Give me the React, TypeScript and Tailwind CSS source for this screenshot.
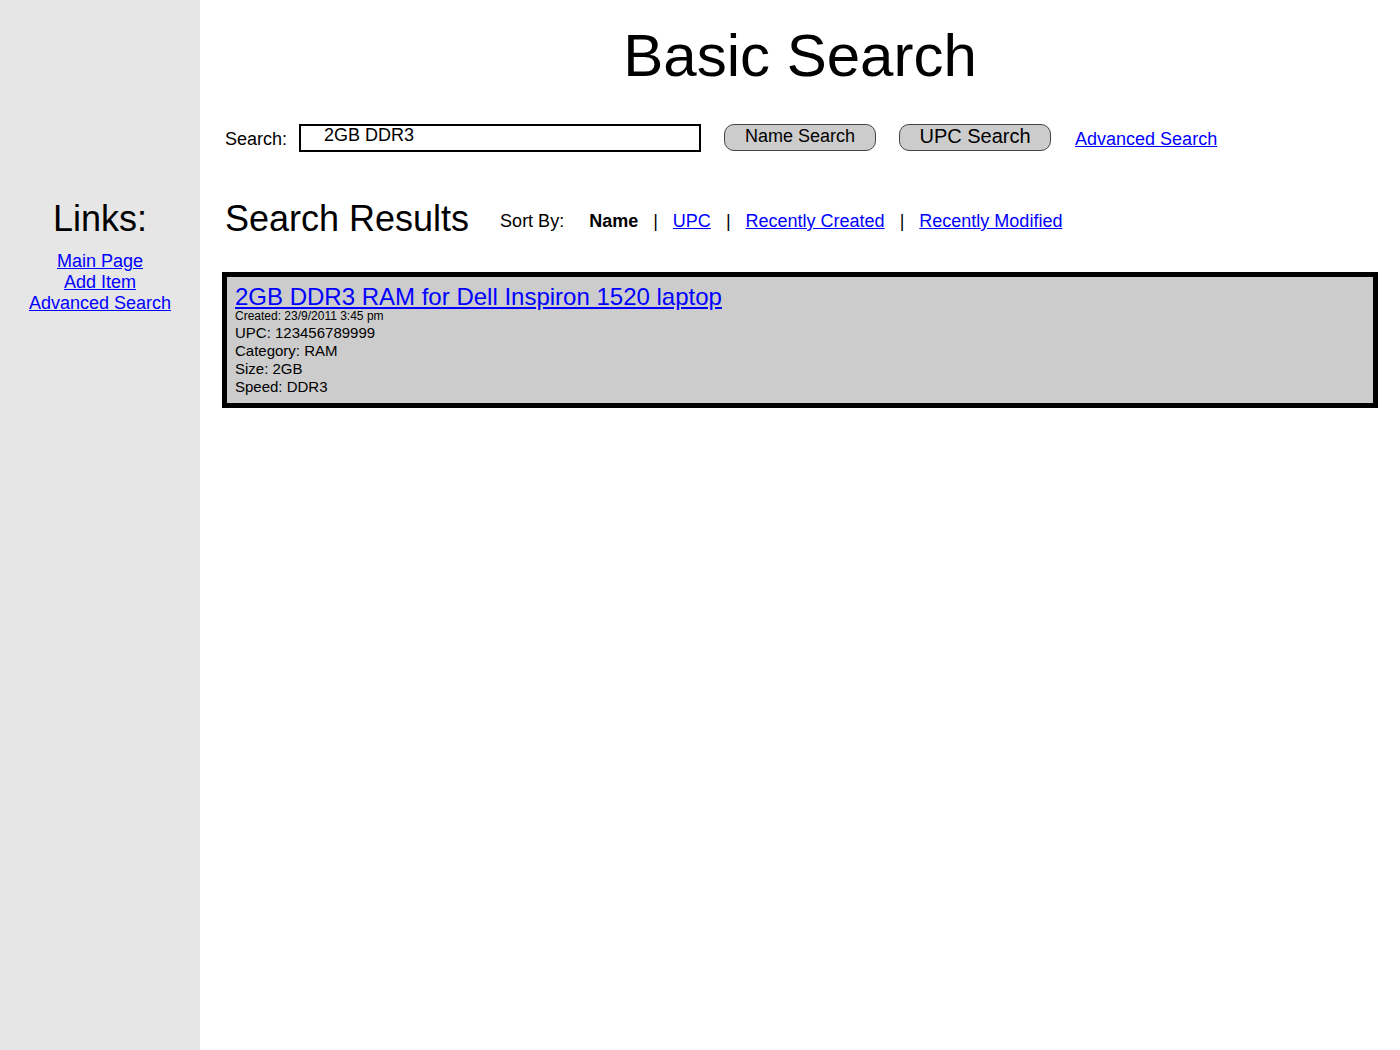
import React from 'react';

const font = { fontFamily: '"Liberation Sans", Arial, sans-serif' };

const SideLinks = () => {
  return (
    <aside className="w-[200px] shrink-0 bg-[#e6e6e6] pt-[198px] text-center">
      <h2 className="text-[36px] leading-[41px] text-black">Links:</h2>
      <ul className="mt-[12px] text-[18px] leading-[21px]">
        <li><a href="#" className="text-[#0000ff] underline">Main Page</a></li>
        <li><a href="#" className="text-[#0000ff] underline">Add Item</a></li>
        <li><a href="#" className="text-[#0000ff] underline">Advanced Search</a></li>
      </ul>
    </aside>
  );
};

const Pipe = () => <span className="mx-[15px] text-black">|</span>;

const App = () => {
  return (
    <div className="flex h-[1050px] bg-white text-black" style={font}>
      <SideLinks />
      <main className="flex-1 px-[22px]">
        <h1 className="pt-[19px] text-center text-[60px] leading-[74px]">Basic Search</h1>

        {/* search bar */}
        <div className="mt-[31px] flex h-[28px] items-center pl-[3px] text-[18px] leading-[21px]">
          <label className="pt-[2px]">Search:</label>
          <input
            readOnly
            value="2GB DDR3"
            className="ml-[12px] h-[28px] w-[402px] border-2 border-black bg-white pl-[23px] pb-[5px] pt-0 text-[18px] leading-[20px] text-black outline-none"
            style={font}
          />
          <button className="ml-[23px] mb-[1px] h-[27px] w-[152px] rounded-[10px] border border-[#444] bg-[#cccccc] pb-[3px] text-[18px] leading-[20px] text-black">
            Name Search
          </button>
          <button className="ml-[23px] mb-[1px] h-[27px] w-[152px] rounded-[10px] border border-[#444] bg-[#cccccc] pb-[4px] text-[20px] leading-[22px] text-black">
            UPC Search
          </button>
          <a href="#" className="ml-[24px] pt-[2px] text-[#0000ff] underline">Advanced Search</a>
        </div>

        {/* results header */}
        <div className="mt-[46px] flex items-start">
          <h2 className="ml-[3px] text-[36px] leading-[41px]">Search Results</h2>
          <div className="ml-[31px] mt-[13px] flex text-[18px] leading-[21px]">
            <span>Sort By:</span>
            <span className="ml-[25px] font-bold">Name</span>
            <Pipe />
            <a href="#" className="text-[#0000ff] underline">UPC</a>
            <Pipe />
            <a href="#" className="text-[#0000ff] underline">Recently Created</a>
            <Pipe />
            <a href="#" className="text-[#0000ff] underline">Recently Modified</a>
          </div>
        </div>

        {/* result card */}
        <div className="mt-[33px] border-[5px] border-black bg-[#cccccc] px-[8px] pt-[7px] pb-[7px]">
          <a href="#" className="block w-fit text-[24px] leading-[26px] text-[#0000ff] underline">
            2GB DDR3 RAM for Dell Inspiron 1520 laptop
          </a>
          <div className="-mt-[1px] pb-[1px] text-[12px] leading-[14px]">Created: 23/9/2011 3:45 pm</div>
          <div className="text-[15px] leading-[18px]">
            <div>UPC: 123456789999</div>
            <div>Category: RAM</div>
            <div>Size: 2GB</div>
            <div>Speed: DDR3</div>
          </div>
        </div>
      </main>
    </div>
  );
};

export default App;
